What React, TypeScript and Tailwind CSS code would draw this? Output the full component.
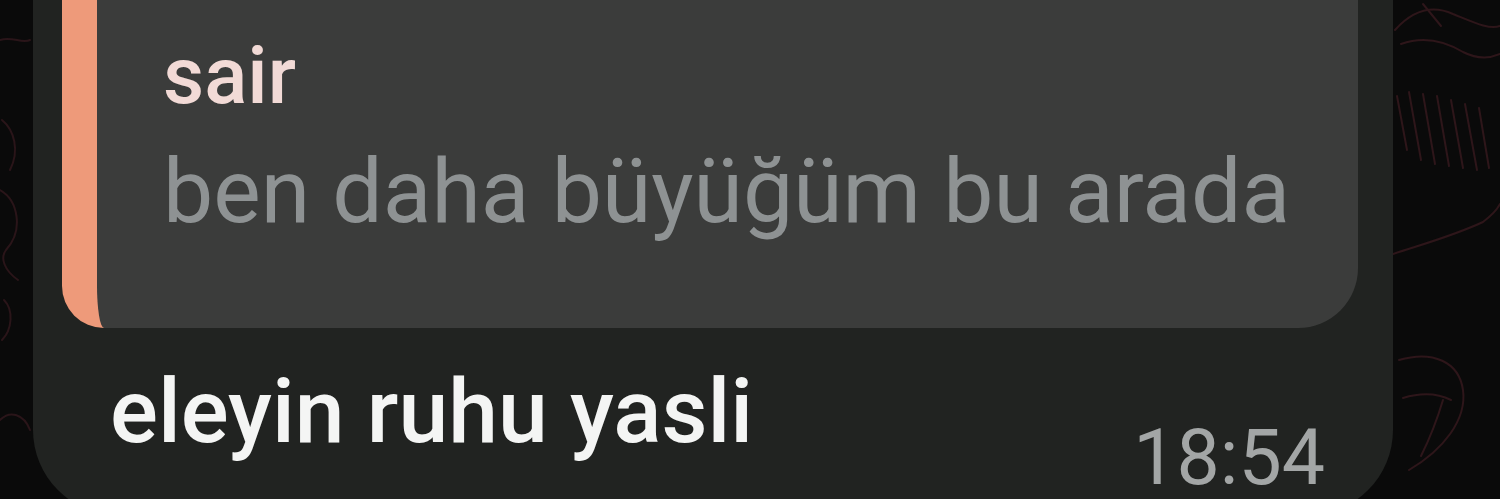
import React from "react";

const font = { fontFamily: "Roboto, 'Noto Sans', sans-serif" };

// faint doodle wallpaper strips on either side of the bubble
function WallLeft() {
  return (
    <svg width="33" height="499" viewBox="0 0 33 499" fill="none" className="block">
      <g stroke="#2a1519" strokeWidth="2" strokeLinecap="round">
        <path d="M0 40 C 12 36, 22 44, 30 40" />
        <path d="M2 120 C 14 130, 20 150, 10 170" />
        <path d="M0 190 C 18 200, 24 230, 6 250 C 0 258, 4 270, 18 280" />
        <path d="M4 300 C 14 310, 12 330, 2 340" />
        <path d="M0 420 C 10 410, 24 414, 30 430" />
      </g>
    </svg>
  );
}

function WallRight() {
  return (
    <svg width="107" height="499" viewBox="0 0 107 499" fill="none" className="block">
      <g stroke="#2e161a" strokeWidth="2" strokeLinecap="round">
        <path d="M2 30 C 20 10, 40 5, 60 14 C 80 22, 96 30, 107 26" />
        <path d="M8 44 C 30 36, 50 40, 70 52 C 86 60, 98 58, 107 54" />
        <path d="M30 4 L 48 26" />
        <path d="M4 96 L 14 150" />
        <path d="M16 92 L 28 160" />
        <path d="M30 94 L 42 164" />
        <path d="M44 96 L 56 166" />
        <path d="M58 100 L 70 168" />
        <path d="M72 104 L 84 170" />
        <path d="M86 108 L 96 168" />
        <path d="M0 254 C 30 244, 60 236, 90 222 C 98 216, 104 210, 107 204" />
        <path d="M6 360 C 40 350, 66 362, 70 390 C 74 420, 50 450, 16 470" />
        <path d="M10 398 C 30 392, 46 394, 58 400" />
        <path d="M50 400 C 44 420, 36 440, 28 456" />
      </g>
    </svg>
  );
}

export default function App() {
  return (
    <div className="w-[1500px] h-[499px] overflow-hidden bg-[#0a0a0a] flex" style={font}>
      <WallLeft />

      {/* message bubble */}
      <div className="w-[1360px] h-[515px] shrink-0 bg-[#212321] rounded-b-[85px] pl-[29px] pr-[35px] flex flex-col">
        {/* replied-to message */}
        <div className="bg-[#3b3c3b] border-l-[35px] border-[#ee9a7a] rounded-bl-[42px] rounded-br-[60px] pl-[66px] pt-[26px] pb-[78px]">
          <div className="text-[80px] leading-[100px] font-medium text-[#f2dad6]">sair</div>
          <div className="mt-[8px] text-[89.5px] leading-[116px] text-[#8e9293] whitespace-nowrap">
            ben daha büyüğüm bu arada
          </div>
        </div>

        {/* message text + time */}
        <div className="mt-[26px] pl-[48px] pr-[33px] flex items-end justify-between">
          <div className="mb-[26px] text-[89.5px] leading-[116px] font-medium text-[#f4f5f4] whitespace-nowrap">
            eleyin ruhu yasli
          </div>
          <div className="text-[77px] leading-[76px] text-[#a3a6a6]">18:54</div>
        </div>
      </div>

      <WallRight />
    </div>
  );
}
